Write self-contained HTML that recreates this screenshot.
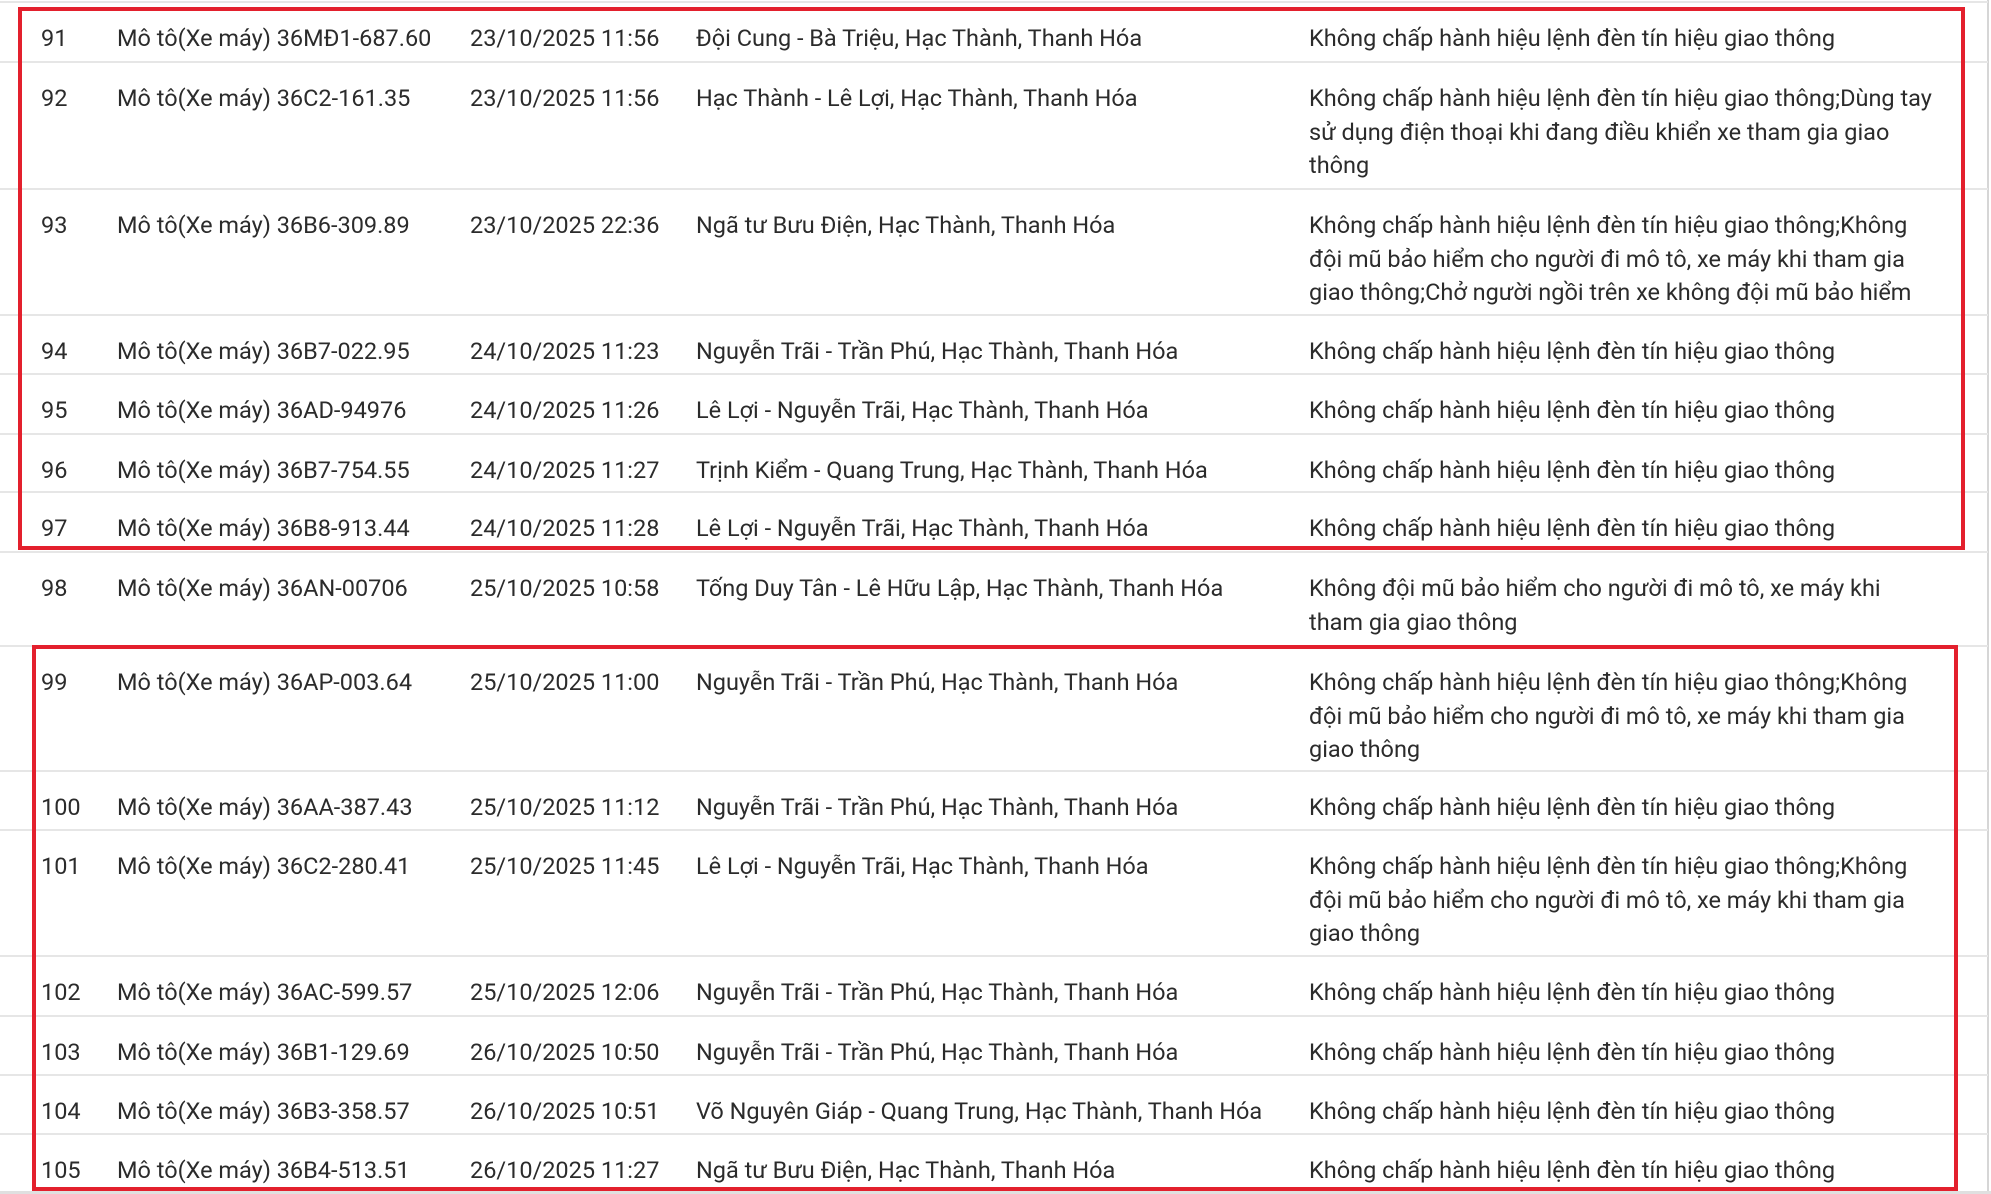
<!DOCTYPE html>
<html><head><meta charset="utf-8">
<style>
html,body{margin:0;padding:0;background:#fff;}
body{width:1991px;height:1194px;position:relative;overflow:hidden;font-family:"Roboto","Liberation Sans",Arial,sans-serif;font-size:23.5px;color:#2b2b2b;}
.row{position:absolute;left:0;width:1988px;border-top:2px solid #e6e6e6;box-sizing:border-box;}
.c{position:absolute;top:19px;line-height:33.7px;white-space:nowrap;}
.n{left:41px}.v{left:117px}.d{left:470px}.l{left:696px}.x{left:1309px}
.box{position:absolute;border:4px solid #e3202d;box-sizing:border-box;}
.vline{position:absolute;left:1987px;top:0;width:2px;height:1194px;background:#d6d6d6;}
.bline{position:absolute;left:0;top:1191px;width:1991px;height:3px;background:#e0e0e0;}
</style></head><body>
<div class="vline"></div>
<div class="row" style="top:1px;height:60px"><span class="c n">91</span><span class="c v">Mô tô(Xe máy) 36MĐ1-687.60</span><span class="c d">23/10/2025 11:56</span><span class="c l">Đội Cung - Bà Triệu, Hạc Thành, Thanh Hóa</span><span class="c x">Không chấp hành hiệu lệnh đèn tín hiệu giao thông</span></div>
<div class="row" style="top:61px;height:127px"><span class="c n">92</span><span class="c v">Mô tô(Xe máy) 36C2-161.35</span><span class="c d">23/10/2025 11:56</span><span class="c l">Hạc Thành - Lê Lợi, Hạc Thành, Thanh Hóa</span><span class="c x">Không chấp hành hiệu lệnh đèn tín hiệu giao thông;Dùng tay<br>sử dụng điện thoại khi đang điều khiển xe tham gia giao<br>thông</span></div>
<div class="row" style="top:188px;height:126px"><span class="c n">93</span><span class="c v">Mô tô(Xe máy) 36B6-309.89</span><span class="c d">23/10/2025 22:36</span><span class="c l">Ngã tư Bưu Điện, Hạc Thành, Thanh Hóa</span><span class="c x">Không chấp hành hiệu lệnh đèn tín hiệu giao thông;Không<br>đội mũ bảo hiểm cho người đi mô tô, xe máy khi tham gia<br>giao thông;Chở người ngồi trên xe không đội mũ bảo hiểm</span></div>
<div class="row" style="top:314px;height:59px"><span class="c n">94</span><span class="c v">Mô tô(Xe máy) 36B7-022.95</span><span class="c d">24/10/2025 11:23</span><span class="c l">Nguyễn Trãi - Trần Phú, Hạc Thành, Thanh Hóa</span><span class="c x">Không chấp hành hiệu lệnh đèn tín hiệu giao thông</span></div>
<div class="row" style="top:373px;height:60px"><span class="c n">95</span><span class="c v">Mô tô(Xe máy) 36AD-94976</span><span class="c d">24/10/2025 11:26</span><span class="c l">Lê Lợi - Nguyễn Trãi, Hạc Thành, Thanh Hóa</span><span class="c x">Không chấp hành hiệu lệnh đèn tín hiệu giao thông</span></div>
<div class="row" style="top:433px;height:58px"><span class="c n">96</span><span class="c v">Mô tô(Xe máy) 36B7-754.55</span><span class="c d">24/10/2025 11:27</span><span class="c l">Trịnh Kiểm - Quang Trung, Hạc Thành, Thanh Hóa</span><span class="c x">Không chấp hành hiệu lệnh đèn tín hiệu giao thông</span></div>
<div class="row" style="top:491px;height:60px"><span class="c n">97</span><span class="c v">Mô tô(Xe máy) 36B8-913.44</span><span class="c d">24/10/2025 11:28</span><span class="c l">Lê Lợi - Nguyễn Trãi, Hạc Thành, Thanh Hóa</span><span class="c x">Không chấp hành hiệu lệnh đèn tín hiệu giao thông</span></div>
<div class="row" style="top:551px;height:94px"><span class="c n">98</span><span class="c v">Mô tô(Xe máy) 36AN-00706</span><span class="c d">25/10/2025 10:58</span><span class="c l">Tống Duy Tân - Lê Hữu Lập, Hạc Thành, Thanh Hóa</span><span class="c x">Không đội mũ bảo hiểm cho người đi mô tô, xe máy khi<br>tham gia giao thông</span></div>
<div class="row" style="top:645px;height:125px"><span class="c n">99</span><span class="c v">Mô tô(Xe máy) 36AP-003.64</span><span class="c d">25/10/2025 11:00</span><span class="c l">Nguyễn Trãi - Trần Phú, Hạc Thành, Thanh Hóa</span><span class="c x">Không chấp hành hiệu lệnh đèn tín hiệu giao thông;Không<br>đội mũ bảo hiểm cho người đi mô tô, xe máy khi tham gia<br>giao thông</span></div>
<div class="row" style="top:770px;height:59px"><span class="c n">100</span><span class="c v">Mô tô(Xe máy) 36AA-387.43</span><span class="c d">25/10/2025 11:12</span><span class="c l">Nguyễn Trãi - Trần Phú, Hạc Thành, Thanh Hóa</span><span class="c x">Không chấp hành hiệu lệnh đèn tín hiệu giao thông</span></div>
<div class="row" style="top:829px;height:126px"><span class="c n">101</span><span class="c v">Mô tô(Xe máy) 36C2-280.41</span><span class="c d">25/10/2025 11:45</span><span class="c l">Lê Lợi - Nguyễn Trãi, Hạc Thành, Thanh Hóa</span><span class="c x">Không chấp hành hiệu lệnh đèn tín hiệu giao thông;Không<br>đội mũ bảo hiểm cho người đi mô tô, xe máy khi tham gia<br>giao thông</span></div>
<div class="row" style="top:955px;height:60px"><span class="c n">102</span><span class="c v">Mô tô(Xe máy) 36AC-599.57</span><span class="c d">25/10/2025 12:06</span><span class="c l">Nguyễn Trãi - Trần Phú, Hạc Thành, Thanh Hóa</span><span class="c x">Không chấp hành hiệu lệnh đèn tín hiệu giao thông</span></div>
<div class="row" style="top:1015px;height:59px"><span class="c n">103</span><span class="c v">Mô tô(Xe máy) 36B1-129.69</span><span class="c d">26/10/2025 10:50</span><span class="c l">Nguyễn Trãi - Trần Phú, Hạc Thành, Thanh Hóa</span><span class="c x">Không chấp hành hiệu lệnh đèn tín hiệu giao thông</span></div>
<div class="row" style="top:1074px;height:59px"><span class="c n">104</span><span class="c v">Mô tô(Xe máy) 36B3-358.57</span><span class="c d">26/10/2025 10:51</span><span class="c l">Võ Nguyên Giáp - Quang Trung, Hạc Thành, Thanh Hóa</span><span class="c x">Không chấp hành hiệu lệnh đèn tín hiệu giao thông</span></div>
<div class="row" style="top:1133px;height:59px"><span class="c n">105</span><span class="c v">Mô tô(Xe máy) 36B4-513.51</span><span class="c d">26/10/2025 11:27</span><span class="c l">Ngã tư Bưu Điện, Hạc Thành, Thanh Hóa</span><span class="c x">Không chấp hành hiệu lệnh đèn tín hiệu giao thông</span></div>
<div class="bline"></div>
<div class="box" style="left:18px;top:7px;width:1947px;height:543px"></div>
<div class="box" style="left:32px;top:645px;width:1926px;height:546px"></div>
</body></html>
